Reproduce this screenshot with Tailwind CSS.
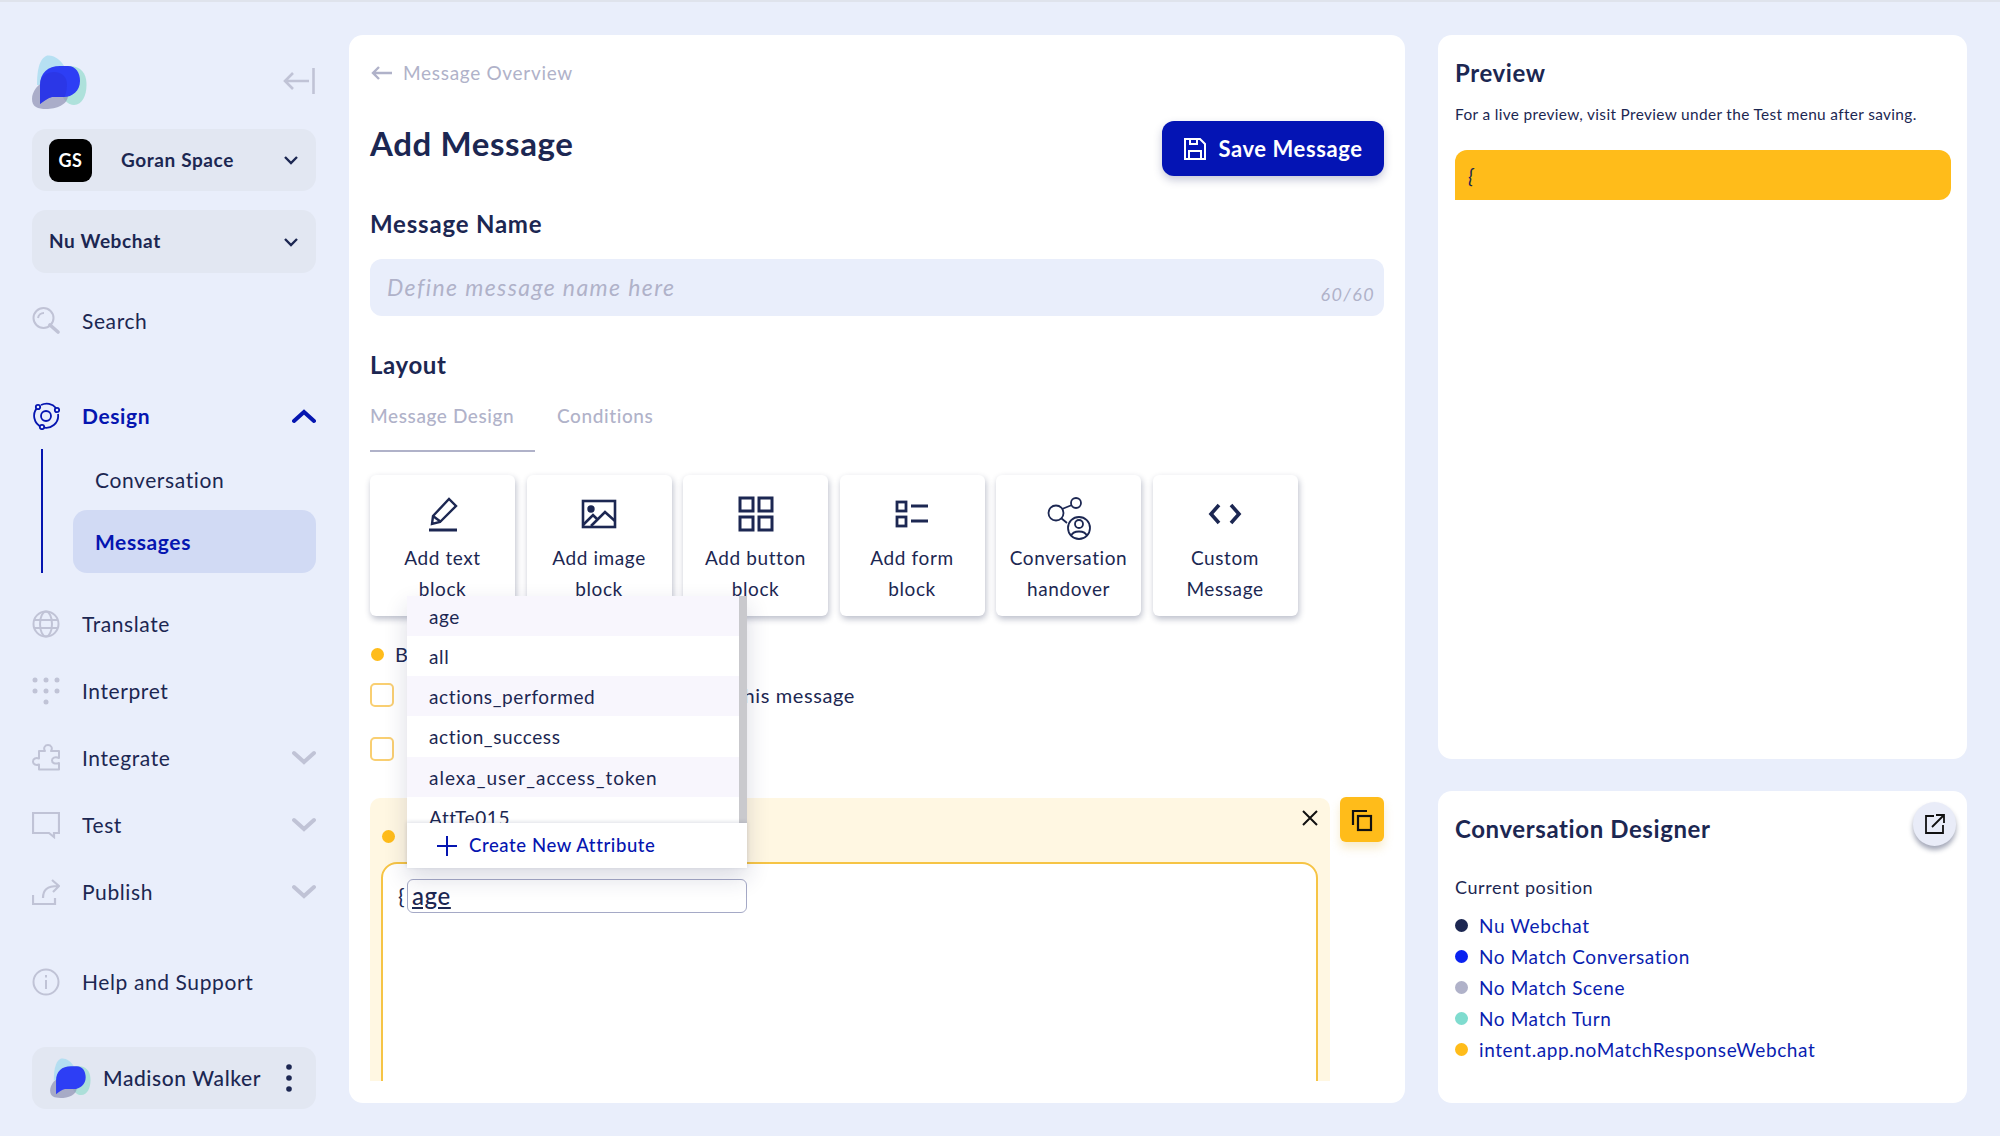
<!DOCTYPE html>
<html><head><meta charset="utf-8"><script src="https://cdn.jsdelivr.net/npm/@tailwindcss/browser@4"></script></head>
<body class="m-0">
<div class="w-[2000px] h-[1136px] overflow-hidden bg-[#e9eefb] flex flex-col font-['Lato',sans-serif] text-[#1c2752] text-[21px] tracking-[0.6px]">
<div class="h-[2px] shrink-0 bg-[#dfe3ec]"></div>
<div class="flex flex-1 min-h-0">
<!-- Sidebar -->
<aside class="w-[349px] shrink-0 pl-[32px] pr-[33px] flex flex-col">
  <div class="mt-[53px] h-[54px] flex items-center justify-between">
    <svg width="55" height="54" viewBox="0 0 55 54"><path d="M5 30C5 20 6 5 14 1c6-2 14 3 18 10v19z" fill="#a9dcf0" opacity=".8"/><path d="M30 12c10-3 22 0 24 12 2 12-2 26-12 26-6 0-12-6-12-12z" fill="#9adcd0" opacity=".75"/><path d="M0 44c0-8 6-14 10-16l26 12c0 10-12 14-22 14-8 0-14-2-14-10z" fill="#8f92b4" opacity=".7"/><path d="M8 49V30C8 18 16 11 28 11h8c8 0 12 7 12 15 0 10-8 16-16 16H20c-4 1-8 4-12 7z" fill="#2d3ef5"/><path d="M8 49V30c0-8 6-13 14-13s13 5 13 12c0 7-2 13-3 13H20c-4 1-8 4-12 7z" fill="#2933dd" opacity=".6"/></svg>
    <svg class="-mt-[2px]" width="34" height="28" viewBox="0 0 34 28" fill="none" stroke="#c0c3d6" stroke-width="2.6"><path d="M31.500 1v26"/><path d="M27 14H3M11 6l-8 8 8 8"/></svg>
  </div>
  <div class="mt-[20px] h-[62px] rounded-[14px] bg-[#e2e7f2] flex items-center pl-[17px] pr-[17px]">
    <div class="w-[43px] h-[43px] rounded-[9px] bg-black text-white flex items-center justify-center font-bold text-[18px]">GS</div>
    <span class="ml-[29px] flex-1 font-bold text-[19px]">Goran Space</span>
    <svg width="16" height="12" viewBox="0 0 16 12" fill="none" stroke="#1c2752" stroke-width="2.4"><path d="M2 3l6 6 6-6"/></svg>
  </div>
  <div class="mt-[19px] h-[63px] rounded-[14px] bg-[#e2e7f2] flex items-center pl-[17px] pr-[17px]">
    <span class="flex-1 font-bold text-[19px]">Nu Webchat</span>
    <svg width="16" height="12" viewBox="0 0 16 12" fill="none" stroke="#1c2752" stroke-width="2.4"><path d="M2 3l6 6 6-6"/></svg>
  </div>
  <div class="mt-[28px] h-[40px] flex items-center">
    <svg class="w-[28px] h-[28px] mr-[22px]" viewBox="0 0 28 28" fill="none" stroke="#c0c3d6" stroke-width="2"><circle cx="11.5" cy="11" r="10"/><path d="M6 11a6 6 0 0 1 6-5"/><path d="M18 18l8 7" stroke-width="3.6" stroke-linecap="round"/></svg>
    <span>Search</span>
  </div>
  <div class="mt-[55px] h-[40px] flex items-center text-[#0515b0] font-bold">
    <svg class="w-[28px] h-[28px] mr-[22px]" viewBox="0 0 28 28" fill="none" stroke="#0515b0" stroke-width="1.8"><path d="M6 5a12 12 0 1 0 20 7M9 3a12 12 0 0 1 15 3"/><circle cx="14" cy="14" r="5"/><circle cx="6" cy="5" r="2.2" fill="#e9eefb"/><circle cx="25" cy="8" r="2.2" fill="#e9eefb"/><circle cx="10" cy="25" r="2.2" fill="#e9eefb"/></svg>
    <span class="flex-1">Design</span>
    <svg width="24" height="16" viewBox="0 0 24 16" fill="none" stroke="#0515b0" stroke-width="4" stroke-linecap="round"><path d="M2 13l10-9 10 9"/></svg>
  </div>
  <div class="mt-[13px] flex">
    <div class="w-[2px] ml-[9px] bg-[#0515b0]"></div>
    <div class="ml-[30px] flex-1">
      <div class="h-[61px] pl-[22px] flex items-center">Conversation</div>
      <div class="h-[63px] pl-[22px] flex items-center rounded-[14px] bg-[#d1daf4] text-[#0515b0] font-bold">Messages</div>
    </div>
  </div>
  <div class="mt-[31px] h-[40px] flex items-center">
    <svg class="w-[28px] h-[28px] mr-[22px]" viewBox="0 0 28 28" fill="none" stroke="#c0c3d6" stroke-width="2"><circle cx="14" cy="14" r="12.5"/><ellipse cx="14" cy="14" rx="6" ry="12.5"/><path d="M2 10h24M2 18h24"/></svg>
    <span>Translate</span>
  </div>
  <div class="mt-[27px] h-[40px] flex items-center">
    <svg class="w-[28px] h-[28px] mr-[22px]" viewBox="0 0 28 28" fill="#c0c3d6"><circle cx="3" cy="3" r="2.5"/><circle cx="14" cy="3" r="2.5"/><circle cx="25" cy="3" r="2.5"/><circle cx="3" cy="14" r="2.5"/><circle cx="14" cy="14" r="2.5"/><circle cx="25" cy="14" r="2.5"/><circle cx="14" cy="25" r="2.5"/></svg>
    <span>Interpret</span>
  </div>
  <div class="mt-[27px] h-[40px] flex items-center">
    <svg class="w-[28px] h-[28px] mr-[22px]" viewBox="0 0 28 28" fill="none" stroke="#c0c3d6" stroke-width="2" stroke-linejoin="round"><path d="M7 7h6c-2-3 0-6 3-6s5 3 3 6h8v7c-4-2-7 0-7 2.500s3 4 7 2.500v6.500H7v-5c-3 1-6 0-6-3s3-4 6-3z"/></svg>
    <span class="flex-1">Integrate</span>
    <svg width="24" height="16" viewBox="0 0 24 16" fill="none" stroke="#c0c3d6" stroke-width="4" stroke-linecap="round"><path d="M2 3l10 9 10-9"/></svg>
  </div>
  <div class="mt-[27px] h-[40px] flex items-center">
    <svg class="w-[28px] h-[28px] mr-[22px]" viewBox="0 0 28 28" fill="none" stroke="#c0c3d6" stroke-width="2.200"><path d="M1 2h26v20h-5v4l-5-4H1z"/></svg>
    <span class="flex-1">Test</span>
    <svg width="24" height="16" viewBox="0 0 24 16" fill="none" stroke="#c0c3d6" stroke-width="4" stroke-linecap="round"><path d="M2 3l10 9 10-9"/></svg>
  </div>
  <div class="mt-[27px] h-[40px] flex items-center">
    <svg class="w-[28px] h-[28px] mr-[22px]" viewBox="0 0 28 28" fill="none" stroke="#c0c3d6" stroke-width="2.200"><path d="M1 17v9h22v-6"/><path d="M11 20c0-8 4-12 15-12M20 2l7 6-6 6"/></svg>
    <span class="flex-1">Publish</span>
    <svg width="24" height="16" viewBox="0 0 24 16" fill="none" stroke="#c0c3d6" stroke-width="4" stroke-linecap="round"><path d="M2 3l10 9 10-9"/></svg>
  </div>
  <div class="mt-[50px] h-[40px] flex items-center">
    <svg class="w-[28px] h-[28px] mr-[22px]" viewBox="0 0 28 28" fill="none" stroke="#c0c3d6" stroke-width="2"><circle cx="14" cy="14" r="12.5"/><path d="M14 12v9M14 7v2.500"/></svg>
    <span>Help and Support</span>
  </div>
  <div class="mt-[45px] h-[62px] rounded-[14px] bg-[#e2e7f2] flex items-center pl-[18px] pr-[24px]">
    <svg width="41" height="40" viewBox="0 0 55 54"><path d="M5 30C5 20 6 5 14 1c6-2 14 3 18 10v19z" fill="#a9dcf0" opacity=".8"/><path d="M30 12c10-3 22 0 24 12 2 12-2 26-12 26-6 0-12-6-12-12z" fill="#9adcd0" opacity=".75"/><path d="M0 44c0-8 6-14 10-16l26 12c0 10-12 14-22 14-8 0-14-2-14-10z" fill="#8f92b4" opacity=".7"/><path d="M8 49V30C8 18 16 11 28 11h8c8 0 12 7 12 15 0 10-8 16-16 16H20c-4 1-8 4-12 7z" fill="#2d3ef5"/></svg>
    <span class="ml-[12px] flex-1 font-medium whitespace-nowrap">Madison Walker</span>
    <svg width="6" height="30" viewBox="0 0 6 30" fill="#1c2752"><circle cx="3" cy="4" r="2.800"/><circle cx="3" cy="15" r="2.800"/><circle cx="3" cy="26" r="2.800"/></svg>
  </div>
</aside>
<!-- Main -->
<main class="relative mt-[33px] w-[1056px] h-[1068px] rounded-[14px] bg-white px-[21px] shrink-0">
  <div class="pt-[26px] h-[50px] flex items-center text-[#b0b2c9] text-[19px] tracking-[0.7px]">
    <svg class="mr-[11px]" width="22" height="16" viewBox="0 0 22 16" fill="none" stroke="#b0b2c9" stroke-width="2.400"><path d="M22 8H3M9 2L3 8l6 6"/></svg>
    Message Overview
  </div>
  <div class="mt-[36px] h-[55px] flex justify-between">
    <h1 class="font-bold text-[33px] leading-[44px]">Add Message</h1>
    <div class="w-[222px] h-[55px] rounded-[12px] bg-[#0414b4] text-white font-bold text-[22px] flex items-center justify-center shadow-[0_4px_8px_rgba(30,40,100,0.25)]">
      <svg class="mr-[11px]" width="24" height="24" viewBox="0 0 24 24" fill="none" stroke="white" stroke-width="2"><path d="M2 2h15l5 5v15H2z"/><path d="M6 22v-8h12v8M7 2v5h7V2"/></svg>Save Message
    </div>
  </div>
  <div class="mt-[32px] h-[32px] flex items-center font-bold text-[24px] tracking-[0.8px]">Message Name</div>
  <div class="relative mt-[19px] h-[57px] rounded-[12px] bg-[#e9eefb] flex items-center pl-[17px] italic text-[#b0b2c9] tracking-[1.4px] text-[23px]">
    Define message name here
    <span class="absolute right-[9px] bottom-[8px] text-[18px]">60/60</span>
  </div>
  <div class="mt-[33px] h-[32px] flex items-center font-bold text-[24px]">Layout</div>
  <div class="mt-[16px] flex text-[19px] text-[#b0b2c9] font-medium">
    <div class="w-[165px] h-[55px] pt-[5px] border-b-2 border-[#b0b2c9] whitespace-nowrap">Message Design</div>
    <div class="ml-[22px] pt-[5px]">Conditions</div>
  </div>
  <div class="mt-[23px] flex gap-[11.500px] text-center text-[19px] leading-[31px]">
    <div class="w-[145px] h-[141px] rounded-[6px] bg-white shadow-[1px_3px_6px_rgba(30,40,80,0.3)] pt-[19px]">
      <svg class="mx-auto h-[40px] block" width="40" height="40" viewBox="0 0 40 40" fill="none" stroke="#1c2752" stroke-width="2.400"><path d="M6 36h28" stroke-width="3"/><path d="M9 30l1-8L26 5l7 7-16 16z"/><path d="M10 22l8 6"/></svg>
      <div class="mt-[8px]">Add text<br>block</div>
    </div>
    <div class="w-[145px] h-[141px] rounded-[6px] bg-white shadow-[1px_3px_6px_rgba(30,40,80,0.3)] pt-[19px]">
      <svg class="mx-auto h-[40px] block" width="40" height="40" viewBox="0 0 40 40" fill="none" stroke="#1c2752" stroke-width="2.600"><rect x="4" y="7" width="32" height="26"/><circle cx="12" cy="15" r="2.400" fill="#1c2752"/><path d="M4 31l10-10 5 5M12 32l14-14 10 9"/></svg>
      <div class="mt-[8px]">Add image<br>block</div>
    </div>
    <div class="w-[145px] h-[141px] rounded-[6px] bg-white shadow-[1px_3px_6px_rgba(30,40,80,0.3)] pt-[19px]">
      <svg class="mx-auto h-[40px] block" width="40" height="40" viewBox="0 0 40 40" fill="none" stroke="#1c2752" stroke-width="3"><rect x="4" y="4" width="13" height="13"/><rect x="23" y="4" width="13" height="13"/><rect x="4" y="23" width="13" height="13"/><rect x="23" y="23" width="13" height="13"/></svg>
      <div class="mt-[8px]">Add button<br>block</div>
    </div>
    <div class="w-[145px] h-[141px] rounded-[6px] bg-white shadow-[1px_3px_6px_rgba(30,40,80,0.3)] pt-[19px]">
      <svg class="mx-auto h-[40px] block" width="40" height="40" viewBox="0 0 40 40" fill="none" stroke="#1c2752" stroke-width="2.800"><rect x="5" y="8" width="9" height="9"/><rect x="5" y="23" width="9" height="9"/><path d="M19 12h17M19 27h17"/></svg>
      <div class="mt-[8px]">Add form<br>block</div>
    </div>
    <div class="w-[145px] h-[141px] rounded-[6px] bg-white shadow-[1px_3px_6px_rgba(30,40,80,0.3)] pt-[21px]">
      <svg class="mx-auto h-[44px] block" width="44" height="44" viewBox="0 0 44 44" fill="none" stroke="#1c2752" stroke-width="1.800"><circle cx="9" cy="17" r="7.500"/><circle cx="29" cy="7" r="5"/><path d="M15 13l10-4M14 22l6 5"/><circle cx="32" cy="32" r="11"/><circle cx="32" cy="28" r="4"/><path d="M24 40c2-6 14-6 16 0"/></svg>
      <div class="mt-[2px]">Conversation<br>handover</div>
    </div>
    <div class="w-[145px] h-[141px] rounded-[6px] bg-white shadow-[1px_3px_6px_rgba(30,40,80,0.3)] pt-[19px]">
      <svg class="mx-auto h-[40px] block" width="40" height="40" viewBox="0 0 40 40" fill="none" stroke="#1c2752" stroke-width="3.600"><path d="M14 11l-8 9 8 9M26 11l8 9-8 9"/></svg>
      <div class="mt-[8px]">Custom<br>Message</div>
    </div>
  </div>
  <div class="mt-[26px] h-[24px] flex items-center text-[20px]">
    <span class="w-[13px] h-[13px] rounded-full bg-[#ffbc1a] ml-[1px]"></span><span class="ml-[11px]">Behavior</span>
  </div>
  <div class="mt-[17px] h-[24px] w-[485px] flex items-center text-[20px]">
    <span class="w-[24px] h-[24px] rounded-[5px] border-2 border-[#f9cf72]"></span><span class="ml-auto whitespace-nowrap">Hide in this message</span>
  </div>
  <div class="mt-[30px] h-[24px] flex items-center">
    <span class="w-[24px] h-[24px] rounded-[5px] border-2 border-[#f9cf72]"></span>
  </div>
  <div class="mt-[36px] flex gap-[10px] items-start">
    <div class="w-[960px] h-[283px] overflow-hidden rounded-t-[10px] bg-[#fff7e2] px-[11px] relative mt-[1px]">
      <div class="mt-[32px] h-[12px] flex items-center">
        <span class="w-[13px] h-[13px] rounded-full bg-[#ffbc1a] ml-[1px]"></span>
      </div>
      <svg class="absolute right-[12px] top-[12px]" width="16" height="16" viewBox="0 0 16 16" fill="none" stroke="#111" stroke-width="2"><path d="M1 1l14 14M15 1L1 15"/></svg>
      <div class="mt-[20px] w-[937px] h-[260px] rounded-t-[16px] border-2 border-[#f6c445] bg-white pt-[15px] pl-[15px] flex">
        <span class="text-[22px] leading-[34px] w-[9px]">{</span>
        <div class="w-[340px] h-[34px] rounded-[6px] border border-[#a5a9c6] pl-[4px] text-[24px] leading-[32px] underline font-medium">age</div>
      </div>
    </div>
    <div class="w-[44px] h-[45px] rounded-[6px] bg-[#ffbc1a] flex items-center justify-center shadow-[0_6px_10px_rgba(230,190,90,0.3)]">
      <svg width="24" height="24" viewBox="0 0 24 24" fill="none" stroke="#111" stroke-width="2.200"><path d="M3 17V3h14"/><rect x="8" y="8" width="13" height="14"/></svg>
    </div>
  </div>
  <!-- Dropdown -->
  <div class="absolute left-[58px] top-[561px] w-[340px] h-[272px] bg-white flex flex-col shadow-[0_10px_22px_rgba(30,40,90,0.16)] text-[19px]">
    <div class="relative h-[227px] overflow-hidden shrink-0">
      <div class="h-[40px] pl-[22px] pt-[2px] flex items-center bg-[#f8f6fd]">age</div>
      <div class="h-[40px] pl-[22px] pt-[2px] flex items-center">all</div>
      <div class="h-[40px] pl-[22px] pt-[2px] flex items-center bg-[#f8f6fd]">actions_performed</div>
      <div class="h-[41px] pl-[22px] pt-[2px] flex items-center">action_success</div>
      <div class="h-[40px] pl-[22px] pt-[2px] flex items-center bg-[#f8f6fd] tracking-[1px]">alexa_user_access_token</div>
      <div class="h-[40px] pl-[22px] pt-[2px] flex items-center">AttTe015</div>
      <div class="absolute right-0 top-0 w-[8px] h-full bg-[#c9c9cd]"></div>
    </div>
    <div class="flex-1 flex items-center pl-[30px] text-[#0515b0] text-[18.500px] shadow-[0_-1px_4px_rgba(30,40,80,0.15)] z-10 bg-white font-medium">
      <svg class="mr-[12px]" width="20" height="20" viewBox="0 0 20 20" fill="none" stroke="#0515b0" stroke-width="2"><path d="M10 0v20M0 10h20"/></svg>Create New Attribute
    </div>
  </div>
</main>
<!-- Right -->
<div class="ml-[33px] w-[529px] shrink-0 mt-[33px] flex flex-col">
  <section class="h-[724px] rounded-[14px] bg-white pl-[17px] pr-[16px]">
    <h2 class="pt-[22px] h-[56px] font-bold text-[24px] leading-[32px]">Preview</h2>
    <p class="mt-[11px] h-[24px] text-[15.4px] leading-[24px] tracking-[0.35px] whitespace-nowrap">For a live preview, visit Preview under the Test menu after saving.</p>
    <div class="mt-[24px] h-[50px] rounded-t-[12px] rounded-br-[12px] bg-[#ffbc1a] pl-[13px] italic text-[20px] leading-[50px]">{</div>
  </section>
  <section class="relative mt-[32px] h-[312px] rounded-[14px] bg-white pl-[17px]">
    <h2 class="pt-[22px] h-[54px] font-bold text-[24px] leading-[32px]">Conversation Designer</h2>
    <button class="absolute left-[475px] top-[11px] w-[43px] h-[44px] rounded-full bg-[#e9ecf8] flex items-center justify-center shadow-[0_4px_5px_rgba(30,40,80,0.4)]">
      <svg width="20" height="20" viewBox="0 0 20 20" fill="none" stroke="#111" stroke-width="1.800"><path d="M9 2H1v17h17v-8"/><path d="M7 13L19 1M11 1h8v8"/></svg>
    </button>
    <p class="mt-[29px] h-[26px] leading-[26px] text-[18px]">Current position</p>
    <ul class="mt-[10px] text-[#0a1eb0] text-[19px] leading-[31px]">
      <li class="flex items-center h-[31px]"><span class="w-[13px] h-[13px] rounded-full bg-[#1c2752] mr-[11px]"></span>Nu Webchat</li>
      <li class="flex items-center h-[31px]"><span class="w-[13px] h-[13px] rounded-full bg-[#0a22f0] mr-[11px]"></span>No Match Conversation</li>
      <li class="flex items-center h-[31px]"><span class="w-[13px] h-[13px] rounded-full bg-[#b0b2c9] mr-[11px]"></span>No Match Scene</li>
      <li class="flex items-center h-[31px]"><span class="w-[13px] h-[13px] rounded-full bg-[#7fdccf] mr-[11px]"></span>No Match Turn</li>
      <li class="flex items-center h-[31px]"><span class="w-[13px] h-[13px] rounded-full bg-[#ffbc1a] mr-[11px]"></span>intent.app.noMatchResponseWebchat</li>
    </ul>
  </section>
</div>
</div>
</div>
</body></html>
